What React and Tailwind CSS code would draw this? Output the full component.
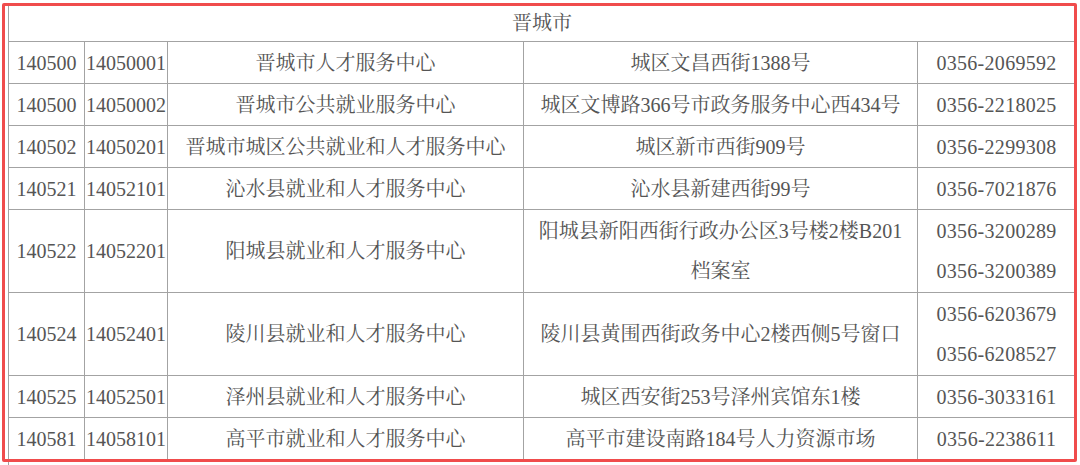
const ROWS = [
  { a: '140500', b: '14050001', name: '晋城市人才服务中心', addr: ['城区文昌西街1388号'], tel: ['0356-2069592'] },
  { a: '140500', b: '14050002', name: '晋城市公共就业服务中心', addr: ['城区文博路366号市政务服务中心西434号'], tel: ['0356-2218025'] },
  { a: '140502', b: '14050201', name: '晋城市城区公共就业和人才服务中心', addr: ['城区新市西街909号'], tel: ['0356-2299308'] },
  { a: '140521', b: '14052101', name: '沁水县就业和人才服务中心', addr: ['沁水县新建西街99号'], tel: ['0356-7021876'] },
  { a: '140522', b: '14052201', name: '阳城县就业和人才服务中心', addr: ['阳城县新阳西街行政办公区3号楼2楼B201', '档案室'], tel: ['0356-3200289', '0356-3200389'] },
  { a: '140524', b: '14052401', name: '陵川县就业和人才服务中心', addr: ['陵川县黄围西街政务中心2楼西侧5号窗口'], tel: ['0356-6203679', '0356-6208527'] },
  { a: '140525', b: '14052501', name: '泽州县就业和人才服务中心', addr: ['城区西安街253号泽州宾馆东1楼'], tel: ['0356-3033161'] },
  { a: '140581', b: '14058101', name: '高平市就业和人才服务中心', addr: ['高平市建设南路184号人力资源市场'], tel: ['0356-2238611'] },
];

function Lines({ items }) {
  return items.map((t, i) => <div key={i}>{t}</div>);
}

export default function App() {
  return (
    <div
      className="relative w-[1080px] h-[465px] overflow-hidden bg-white text-[20px] leading-[40px] text-[#555555]"
      style={{ fontFamily: '"Liberation Serif", "Noto Serif CJK SC", "Noto Sans CJK SC", serif' }}
    >
      <div className="pl-[8px] pt-[4px]">
        <table className="table-fixed border-collapse w-[1067px] text-center">
          <colgroup>
            <col className="w-[76px]" />
            <col className="w-[83px]" />
            <col className="w-[356px]" />
            <col className="w-[394px]" />
            <col className="w-[158px]" />
          </colgroup>
          <tbody>
            <tr className="h-[37px]">
              <td colSpan={5} className="border border-[#a3a3a3] p-0 leading-[32px]">晋城市</td>
            </tr>
            {ROWS.map((r, i) => {
              const tall = r.addr.length > 1 || r.tel.length > 1;
              return (
                <tr key={i} className={tall ? 'h-[83px]' : 'h-[42px]'}>
                  <td className="border border-[#a3a3a3] p-0 whitespace-nowrap">{r.a}</td>
                  <td className="border border-[#a3a3a3] p-0 whitespace-nowrap">{r.b}</td>
                  <td className="border border-[#a3a3a3] p-0 whitespace-nowrap">{r.name}</td>
                  <td className="border border-[#a3a3a3] p-0 whitespace-nowrap"><Lines items={r.addr} /></td>
                  <td className="border border-[#a3a3a3] p-0 whitespace-nowrap tracking-[0.3px]"><Lines items={r.tel} /></td>
                </tr>
              );
            })}
          </tbody>
        </table>
        <div className="h-[10px] border-l border-[#a3a3a3]" />
      </div>
      <div className="absolute left-[2px] top-[3px] w-[1075px] h-[459px] border-[3px] border-[#f04c4c] rounded-[2px]" />
    </div>
  );
}
